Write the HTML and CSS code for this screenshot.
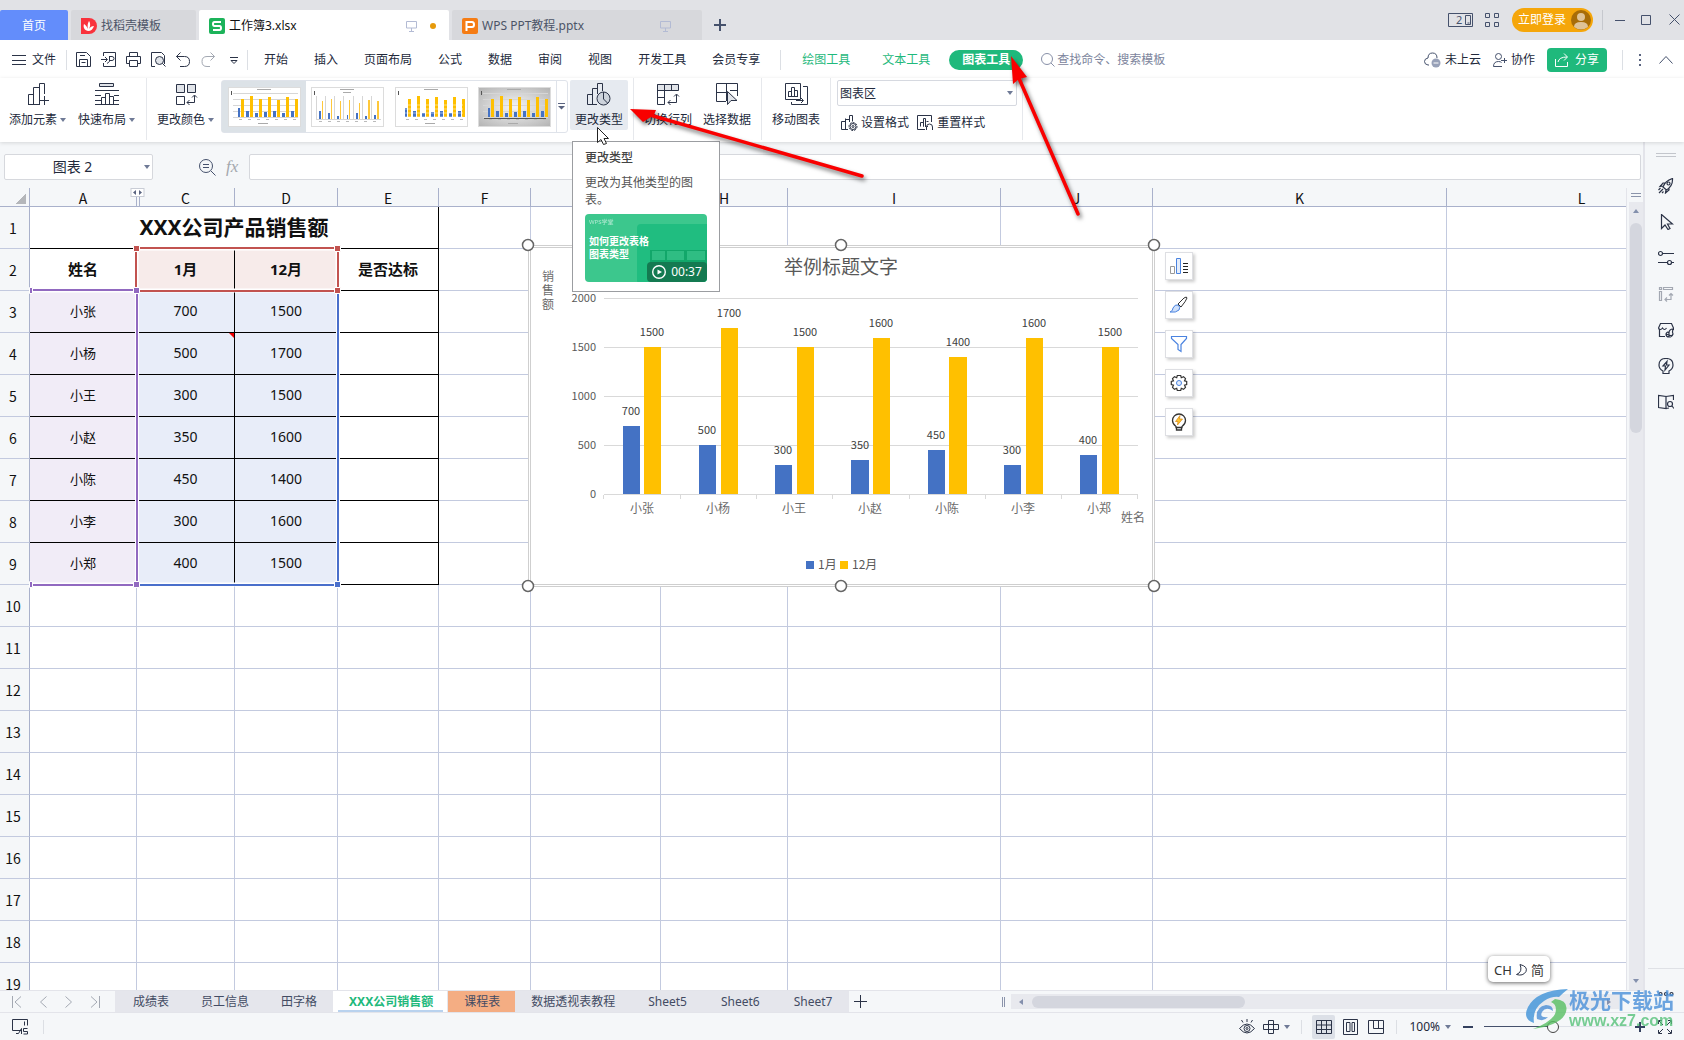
FILE: index.html
```html
<!DOCTYPE html>
<html lang="zh-CN">
<head>
<meta charset="utf-8">
<title>工作簿3.xlsx</title>
<link rel="stylesheet" href="styles.css">
</head>
<body>
<header class="titlebar">
  <nav class="doc-tabs">
    <button class="doc-tab home">首页</button>
    <button class="doc-tab docer">
      <svg width="16" height="16"><path d="M0 0h8a8 8 0 0 1 0 16H0z" fill="#f9323c"/><path d="M7 13C3 12 2 9 3 6c2 1 3 3 4 5-1-4 0-6 1-8 2 3 1 6 0 8 1-2 3-3 5-3-1 3-3 5-6 5z" fill="#fff"/></svg>
      <span>找稻壳模板</span>
    </button>
    <button class="doc-tab active">
      <svg width="16" height="16"><rect width="16" height="16" rx="2" fill="#1cb35a"/><path d="M12 4H5.500Q4 4 4 6T5.500 8h5Q12 8 12 10t-1.500 2H4" fill="none" stroke="#fff" stroke-width="2"/></svg>
      <span class="tab-name">工作簿3.xlsx</span>
      <svg width="12" height="12" class="line faint"><path d="M.5 1.500h10v6.500H.5zM5.500 8v3M3 11.500h5"/></svg>
      <i class="unsaved"></i>
    </button>
    <button class="doc-tab slides">
      <svg width="16" height="16"><rect width="16" height="16" rx="2" fill="#f57c14"/><path d="M4.500 13V4H10q2 0 2 2.500T10 9H5" fill="none" stroke="#fff" stroke-width="2"/></svg>
      <span class="tab-name">WPS PPT教程.pptx</span>
      <svg width="12" height="12" class="line faint"><path d="M.5 1.500h10v6.500H.5zM5.500 8v3M3 11.500h5"/></svg>
    </button>
    <button class="new-tab" aria-label="新建"><svg width="12" height="12"><path d="M6 0v12M0 6h12" stroke="#45516c" stroke-width="2"/></svg></button>
  </nav>
  <div class="window-tools">
    <button aria-label="窗口"><svg width="25" height="14" class="line slate"><path d="M.5.5h24v13H.5zM17.500 2.500h5v9h-5zM19.500 10h2"/><text x="8" y="11" class="icon-num">2</text></svg></button>
    <button aria-label="应用"><svg width="14" height="14" class="line slate"><path d="M.5.5h4v4h-4zM9.500.5h4v4h-4zM.5 9.500h4v4h-4zM9.500 9.500h4v4h-4z"/></svg></button>
    <button class="login">立即登录<svg width="20" height="20"><circle cx="10" cy="10" r="10" fill="#a86d08"/><circle cx="10" cy="7" r="4" fill="#dfc397"/><path d="M3 17q0-5 7-5t7 5q-7 5-14 0z" fill="#dfc397"/></svg></button>
    <i class="rule"></i>
    <button aria-label="最小化"><svg width="10" height="10" class="line slate"><path d="M0 5.500h10"/></svg></button>
    <button aria-label="最大化"><svg width="10" height="10" class="line slate"><path d="M.5.5h9v9h-9z"/></svg></button>
    <button aria-label="关闭"><svg width="11" height="11" class="line slate"><path d="M.5.5l10 10M10.500.5l-10 10"/></svg></button>
  </div>
</header>

<nav class="menubar">
  <button class="file"><svg width="14" height="12" class="line"><path d="M0 1.500h14M0 6.500h14M0 10.500h14"/></svg>文件</button>
  <i class="rule"></i>
  <div class="quick">
    <button aria-label="保存"><svg width="16" height="16" class="line"><path d="M.5.5h10l4 4v10H.5zM3.500 14.500v-7h8v7M4 3.500h5M5.500 10.500h4"/></svg></button>
    <button aria-label="输出为PDF"><svg width="16" height="16" class="line"><path d="M2.500 4V.5h12v14h-12V11M0 7.500h6M4 5l2.500 2.500L4 10M8 4.500h3q2 0 2 2t-2 2H8.500M8.500 4.500v5L6 11.500"/></svg></button>
    <button aria-label="打印"><svg width="16" height="16" class="line"><path d="M3.500 4.500v-4h8v4M3.500 11.500h-3v-7h14v7h-3M3.500 8.500h8v6h-8z"/></svg></button>
    <button aria-label="打印预览"><svg width="16" height="16" class="line"><path d="M4 14.500H.5V.5h10l3 3V5M13.500 12v-7"/><circle cx="8.500" cy="8.500" r="4" fill="#e1e4e9"/><path d="M11.500 11.500l3 3"/></svg></button>
    <button aria-label="撤销"><svg width="16" height="16" class="line"><path d="M4.500.5l-4 4 4 4M.5 4.500h8q5 0 5 5t-5 5H4"/></svg></button>
    <button aria-label="恢复"><svg width="16" height="16" class="line pale"><path d="M9.500.5l4 4-4 4M13.500 4.500H6q-5 0-5 5t5 5h3"/></svg></button>
    <button aria-label="更多"><svg width="8" height="8" class="line"><path d="M0 .5h8M1 3.500h6L4 6.500z"/></svg></button>
  </div>
  <i class="rule"></i>
  <div class="menus">
    <a href="#">开始</a><a href="#">插入</a><a href="#">页面布局</a><a href="#">公式</a><a href="#">数据</a><a href="#">审阅</a><a href="#">视图</a><a href="#">开发工具</a><a href="#">会员专享</a>
  </div>
  <i class="rule"></i>
  <div class="menus context">
    <a href="#">绘图工具</a><a href="#">文本工具</a><a href="#" class="current">图表工具</a>
  </div>
  <label class="search"><svg width="14" height="14" class="line"><circle cx="6" cy="6" r="5.500"/><path d="M10 10l3.500 3.500"/></svg><input placeholder="查找命令、搜索模板" aria-label="查找命令、搜索模板"></label>
  <div class="account">
    <button><svg width="17" height="16" class="line"><path d="M5 13H4Q.5 12.500.5 9.500T4 6q0-5 4.500-5T13 6"/><circle cx="12" cy="11" r="4.500" fill="#98a1b8" stroke="none"/><path d="M9.500 11h5" stroke="#fff"/></svg>未上云</button>
    <button><svg width="14" height="14" class="line"><circle cx="5.500" cy="3.500" r="3"/><path d="M9 13.500H.5q0-5 5-5 2 0 3 1M8 7.500h6M11.500 5v5"/></svg>协作</button>
    <button class="share"><svg width="14" height="14" class="line"><path d="M.5 6v7.500h12V9M3 9q1-5 9-5M9 .5L12.500 4 9 7.500"/></svg>分享</button>
    <i class="rule"></i>
    <button aria-label="更多"><svg width="4" height="14"><path d="M1 1h2v2H1zM1 6h2v2H1zM1 11h2v2H1z" fill="#5a6480"/></svg></button>
    <button aria-label="收起"><svg width="14" height="8" class="line"><path d="M.5 7.500l6.500-7 6.500 7"/></svg></button>
  </div>
</nav>

<section class="ribbon">
  <div class="group first">
    <button class="tool"><svg width="24" height="24" class="line"><path d="M2.500 22.500v-10h5v10M7.500 22.500v-17h6v17M2 22.500h12M13.500 14V1.500h5V12M18.500 14v9M14 18.500h9"/></svg><span class="drop">添加元素</span></button>
    <button class="tool"><svg width="24" height="24" class="line"><path d="M4.500 1.500h14v3h-14z" fill="#e1e4e9"/><path d="M0 8.500h24M0 13.500h6M0 18.500h6M0 22.500h24M6.500 22.500v-7h4v7M10.500 22V11.500h4V22M14.500 14.500h4v8M19 13.500h5M19 18.500h5"/></svg><span class="drop">快速布局</span></button>
  </div>
  <div class="group">
    <button class="tool"><svg width="24" height="24" class="line"><path d="M2.500 2.500h8v8h-8zM13.500 2.500h8v8h-8z" fill="#e1e4e9"/><path d="M2.500 14.500h8v8h-8zM13 20.500h7.500v-7M18 15.500l2.500-2.500 2.500 2.500M15.500 18L13 20.500l2.500 2.500"/></svg><span class="drop">更改颜色</span></button>
  </div>
  <div class="gallery">
    <button class="thumb chosen" aria-label="样式1"><svg width="71" height="38"><use href="#mini-lines"/><use href="#mini"/></svg></button>
    <button class="thumb" aria-label="样式2"><svg width="71" height="38"><use href="#mini-cols"/><use href="#mini-thin"/></svg></button>
    <button class="thumb" aria-label="样式3"><svg width="71" height="38"><use href="#mini"/><path d="M9 17h58M9 21h58M9 25h58M9 29h58" stroke="#fff" opacity=".5"/></svg></button>
    <button class="thumb gray" aria-label="样式4"><svg width="71" height="38"><use href="#mini-lines"/><use href="#mini"/><path d="M5 30.500h62" stroke="#555"/></svg></button>
    <button class="gallery-more" aria-label="更多样式"><svg width="8" height="7"><path d="M0 .5h7" stroke="#5a6480"/><path d="M0 3h7L3.500 6.500z" fill="#5a6480"/></svg></button>
  </div>
  <button class="tool hovered"><svg width="24" height="24" class="line"><path d="M10 22.500H.5v-10h5v10M5.500 14V6.500h5M10.500 12V1.500h5V9"/><circle cx="16.500" cy="16.500" r="6.500" fill="#cdd3dc"/><path d="M16.500 10v7l4 4"/></svg><span>更改类型</span></button>
  <div class="group ruled">
    <button class="tool"><svg width="24" height="24" class="line"><path d="M1.500 2.500h21v6h-21z" fill="#e1e4e9"/><path d="M8.500 2.500v20h-7v-20M15.500 2.500v6M1.500 15.500h7M12 20.500h8.500v-8M18 14.500l2.500-2.500 2.500 2.500M14.500 18L12 20.500l2.500 2.500"/></svg><span>切换行列</span></button>
    <button class="tool"><svg width="24" height="24" class="line"><path d="M11 19.500H1.500v-18h21V14M1.500 10.500h10v-9M15 8.500h7.500M11.500 19v-9"/><path d="M12.500 9.500v13l3.500-4h6z" fill="#e1e4e9"/></svg><span>选择数据</span></button>
  </div>
  <div class="group">
    <button class="tool"><svg width="24" height="24" class="line"><path d="M1.500 1.500h15v16h-15zM19 4.500h4.500v18h-16V20M4.500 14.500v-5h3v5M7.500 14.500v-9h3v9M10.500 8.500h3v6M4 14.500h10M12 18.500h7M17 16l2.500 2.500L17 21"/></svg><span>移动图表</span></button>
  </div>
  <div class="format">
    <select aria-label="图表元素"><option>图表区</option></select>
    <div class="format-row">
      <button><svg width="17" height="16" class="line"><path d="M7 14.500H.5v-8h4v8M4.500 9V3.500M4.500 4.500h4M8.500 7V.5h3v6"/><circle cx="12" cy="11.500" r="4" stroke-dasharray="2 1"/><circle cx="12" cy="11.500" r="3"/><circle cx="12" cy="11.500" r="1"/></svg>设置格式</button>
      <button><svg width="17" height="16" class="line"><path d="M8 14.500H.5V.5h14V7M3.500 11.500v-4h3v4M6.500 11.500v-8h2v8M9.500 6.500h2M9.500 15v-3q0-3 3-3t3 3v3M8 11l1.500 1.500L11 11"/></svg>重置样式</button>
    </div>
  </div>
</section>

<main class="workspace">
  <div class="book">
    <div class="formula-bar">
      <div class="name-box"><input value="图表 2" aria-label="名称框"><i class="caret"></i></div>
      <button class="lens" aria-label="查找"><svg width="17" height="17" class="line"><circle cx="7" cy="7" r="6.500"/><path d="M12 12l4.500 4.500M4 5.500h6M4 8.500h6"/></svg></button>
      <button class="fx">fx</button>
      <input class="formula" aria-label="编辑栏">
    </div>
    <div class="sheet-area">
      <div class="sheet">
        <table class="cells">
          <colgroup><col class="w-head"><col class="w-a"><col class="w-c"><col class="w-d"><col class="w-e"><col class="w-f"><col class="w-g"><col class="w-h"><col class="w-i"><col class="w-j"><col class="w-k"><col></colgroup>
          <thead><tr><th class="corner"></th><th>A</th><th>C</th><th>D</th><th>E</th><th>F</th><th>G</th><th>H</th><th>I</th><th>J</th><th>K</th><th class="col-l">L</th></tr></thead>
          <tbody>
          <tr><th>1</th><td colspan="4" class="title box">XXX公司产品销售额</td><td></td><td></td><td></td><td></td><td></td><td></td><td></td></tr>
          <tr class="heads"><th>2</th><td class="box open">姓名</td><td class="box red">1月</td><td class="box red open">12月</td><td class="box">是否达标</td><td></td><td></td><td></td><td></td><td></td><td></td><td></td></tr>
          <tr><th>3</th><td class="box name">小张</td><td class="box blue">700</td><td class="box blue">1500</td><td class="box"></td><td></td><td></td><td></td><td></td><td></td><td></td><td></td></tr>
          <tr><th>4</th><td class="box name">小杨</td><td class="box blue">500</td><td class="box blue">1700</td><td class="box"></td><td></td><td></td><td></td><td></td><td></td><td></td><td></td></tr>
          <tr><th>5</th><td class="box name">小王</td><td class="box blue">300</td><td class="box blue">1500</td><td class="box"></td><td></td><td></td><td></td><td></td><td></td><td></td><td></td></tr>
          <tr><th>6</th><td class="box name">小赵</td><td class="box blue">350</td><td class="box blue">1600</td><td class="box"></td><td></td><td></td><td></td><td></td><td></td><td></td><td></td></tr>
          <tr><th>7</th><td class="box name">小陈</td><td class="box blue">450</td><td class="box blue">1400</td><td class="box"></td><td></td><td></td><td></td><td></td><td></td><td></td><td></td></tr>
          <tr><th>8</th><td class="box name">小李</td><td class="box blue">300</td><td class="box blue">1600</td><td class="box"></td><td></td><td></td><td></td><td></td><td></td><td></td><td></td></tr>
          <tr><th>9</th><td class="box name">小郑</td><td class="box blue">400</td><td class="box blue">1500</td><td class="box"></td><td></td><td></td><td></td><td></td><td></td><td></td><td></td></tr>
          <tr><th>10</th><td></td><td></td><td></td><td></td><td></td><td></td><td></td><td></td><td></td><td></td><td></td></tr>
          <tr><th>11</th><td></td><td></td><td></td><td></td><td></td><td></td><td></td><td></td><td></td><td></td><td></td></tr>
          <tr><th>12</th><td></td><td></td><td></td><td></td><td></td><td></td><td></td><td></td><td></td><td></td><td></td></tr>
          <tr><th>13</th><td></td><td></td><td></td><td></td><td></td><td></td><td></td><td></td><td></td><td></td><td></td></tr>
          <tr><th>14</th><td></td><td></td><td></td><td></td><td></td><td></td><td></td><td></td><td></td><td></td><td></td></tr>
          <tr><th>15</th><td></td><td></td><td></td><td></td><td></td><td></td><td></td><td></td><td></td><td></td><td></td></tr>
          <tr><th>16</th><td></td><td></td><td></td><td></td><td></td><td></td><td></td><td></td><td></td><td></td><td></td></tr>
          <tr><th>17</th><td></td><td></td><td></td><td></td><td></td><td></td><td></td><td></td><td></td><td></td><td></td></tr>
          <tr><th>18</th><td></td><td></td><td></td><td></td><td></td><td></td><td></td><td></td><td></td><td></td><td></td></tr>
          <tr><th>19</th><td></td><td></td><td></td><td></td><td></td><td></td><td></td><td></td><td></td><td></td><td></td></tr>
          </tbody>
        </table>

        <!-- Range outlines, hidden-column marker and comment flag -->
        <svg class="ranges" width="440" height="400" viewBox="0 188 440 400" fill="none">
          <path d="M139.500 196v10" stroke="#a9b1cb"/>
          <rect x="131" y="188.500" width="13" height="8" fill="#fff" stroke="#c9cdd6"/>
          <path d="M136 190v5l-3-2.500zM139 190v5l3-2.500z" fill="#5a6480"/>
          <path d="M229 333h5v5z" fill="#f00000"/>
          <g stroke="#fff" stroke-width="4"><path d="M31 290.500H137V584.500H31M137 584.500H338V290.500M136.500 248.500H337.500V290.500H136.500z"/></g>
          <path d="M137 585H338V290.500" stroke="#4a6fcb" stroke-width="2"/>
          <path d="M31 290H137V585H31" stroke="#9169c0" stroke-width="2"/>
          <path d="M136 248H338V291H136z" stroke="#c25350" stroke-width="2"/>
          <g stroke="#fff">
            <path d="M133.500 245.500h6v6h-6zM334.500 245.500h6v6h-6zM334.500 287.500h6v6h-6z" fill="#c25350"/>
            <path d="M133.500 287.500h6v6h-6zM133.500 581.500h6v6h-6zM29.500 287.500h3v6h-3zM29.500 581.500h3v6h-3z" fill="#9169c0"/>
            <path d="M334.500 581.500h6v6h-6z" fill="#4a6fcb"/>
          </g>
        </svg>

        <svg class="chart" width="626" height="341" viewBox="528 245 626 341">
          <rect x="528.500" y="245.500" width="626" height="341" fill="#fff" stroke="#cfcfcf"/>
          <rect x="530.500" y="247.500" width="622" height="337" fill="#fff" stroke="#cfcfcf"/>
          <text x="841" y="274" class="chart-title">举例标题文字</text>
          <g class="axis-title"><text x="548" y="281">销</text><text x="548" y="295">售</text><text x="548" y="309">额</text><text x="1133" y="522">姓名</text></g>
          <path d="M604 298.500h534M604 347.500h534M604 396.500h534M604 445.500h534M604 494.500h534M603.500 495v4M680.500 495v4M756.500 495v4M832.500 495v4M909.500 495v4M985.500 495v4M1061.500 495v4M1137.500 495v4" stroke="#d9d9d9"/>
          <g class="scale"><text x="596" y="302">2000</text><text x="596" y="351">1500</text><text x="596" y="400">1000</text><text x="596" y="449">500</text><text x="596" y="498">0</text></g>
          <path fill="#4472c4" d="M623 426h17v68h-17zM699 445h17v49h-17zM775 465h17v29h-17zM851 460h18v34h-18zM928 450h17v44h-17zM1004 465h17v29h-17zM1080 455h17v39h-17z"/>
          <path fill="#ffc000" d="M644 347h17v147h-17zM721 328h17v166h-17zM797 347h17v147h-17zM873 338h17v156h-17zM949 357h18v137h-18zM1026 338h17v156h-17zM1102 347h17v147h-17z"/>
          <g class="value"><text x="631" y="415">700</text><text x="707" y="434">500</text><text x="783" y="454">300</text><text x="860" y="449">350</text><text x="936" y="439">450</text><text x="1012" y="454">300</text><text x="1088" y="444">400</text>
          <text x="652" y="336">1500</text><text x="729" y="317">1700</text><text x="805" y="336">1500</text><text x="881" y="327">1600</text><text x="958" y="346">1400</text><text x="1034" y="327">1600</text><text x="1110" y="336">1500</text></g>
          <g class="category"><text x="642" y="513">小张</text><text x="718" y="513">小杨</text><text x="794" y="513">小王</text><text x="870" y="513">小赵</text><text x="947" y="513">小陈</text><text x="1023" y="513">小李</text><text x="1099" y="513">小郑</text></g>
          <path d="M806 561h8v8h-8z" fill="#4472c4"/><path d="M840 561h8v8h-8z" fill="#ffc000"/>
          <g class="legend"><text x="818" y="569">1月</text><text x="852" y="569">12月</text></g>
          <g fill="#fff" stroke="#666" stroke-width="1.500"><circle cx="528" cy="245" r="5.500"/><circle cx="841" cy="245" r="5.500"/><circle cx="1154" cy="245" r="5.500"/><circle cx="528" cy="586" r="5.500"/><circle cx="841" cy="586" r="5.500"/><circle cx="1154" cy="586" r="5.500"/></g>
        </svg>

        <div class="chart-tools">
          <button aria-label="图表元素"><svg width="20" height="20" fill="none"><path d="M1.500 10.500h4v7h-4z" stroke="#999"/><path d="M7.500 2.500h4v15h-4z" fill="#e4edfb" stroke="#4a83e0"/><path d="M14 7.500h5M14 10.500h5M14 13.500h5M14 16.500h5" stroke="#222"/></svg></button>
          <button aria-label="图表样式"><svg width="20" height="20" fill="none"><path d="M9 9l6-6q3-2 3 0-1 3-6 9z" stroke="#333"/><path d="M1 17q3-1 3-4 2-4 5-3 3 2 1 5-3 3-9 2z" fill="#cfe0fa" stroke="#4a83e0"/></svg></button>
          <button aria-label="图表筛选器"><svg width="20" height="20" fill="none"><path d="M2.500 2.500h15v2L12 10.500v7l-3-2v-5l-6.500-6z" stroke="#4a83e0" stroke-width="1.200"/></svg></button>
          <button aria-label="设置"><svg width="20" height="20" fill="none"><path d="M8.300 2.500h3.400l.6 2.200 2.200-1 2 2-1 2.200 2.200.6v3l-2.200.6 1 2.200-2 2-2.200-1-.6 2.200H8.300l-.6-2.200-2.200 1-2-2 1-2.200-2.200-.6v-3l2.200-.6-1-2.200 2-2 2.200 1z" stroke="#333" stroke-width="1.200"/><circle cx="10" cy="10" r="2.500" fill="#e4edfb" stroke="#4a83e0"/></svg></button>
          <button aria-label="在线图表"><svg width="20" height="20" fill="none"><path d="M7 15.500v-1Q3.500 12 3.500 8.500a6.500 6.500 0 0 1 13 0q0 3.500-3.500 6v1zM7.500 15.500v2.500h5v-2.500" stroke="#333" stroke-width="1.300"/><path d="M11 3.500L6.500 9.500H9L8.500 13l5-6h-3z" fill="#ffc52e" stroke="#d68410" stroke-width=".7"/></svg></button>
        </div>
      </div>
      <div class="vscroll">
        <i class="split"></i>
        <div class="track"><i class="up"></i><i class="thumb-v"></i><i class="down"></i></div>
      </div>
    </div>
    <div class="sheet-bar">
      <div class="sheet-nav">
        <button aria-label="第一张"><svg width="10" height="12" class="line"><path d="M.5 0v12M9 .5L3 6l6 5.500"/></svg></button>
        <button aria-label="上一张"><svg width="7" height="12" class="line"><path d="M6.500.5L.5 6l6 5.500"/></svg></button>
        <button aria-label="下一张"><svg width="7" height="12" class="line"><path d="M.5.5l6 5.500-6 5.500"/></svg></button>
        <button aria-label="最后一张"><svg width="10" height="12" class="line"><path d="M9.500 0v12M1 .5L7 6l-6 5.500"/></svg></button>
      </div>
      <div class="sheet-tabs">
        <button>成绩表</button><button>员工信息</button><button>田字格</button><button class="on">XXX公司销售额</button><button class="orange">课程表</button><button>数据透视表教程</button><button class="latin">Sheet5</button><button class="latin">Sheet6</button><button class="latin">Sheet7</button>
      </div>
      <button class="add-sheet" aria-label="新建工作表"><svg width="13" height="13" class="line"><path d="M6.500 0v13M0 6.500h13"/></svg></button>
      <i class="h-split"></i>
      <div class="hscroll"><i class="left"></i><i class="thumb-h"></i><i class="right"></i></div>
    </div>
  </div>
  <aside class="side-panel">
    <i class="grip"></i>
    <button aria-label="快捷"><svg width="16" height="16" class="line"><path d="M5 9q2-6 9.500-8.500Q15 8 8.500 12zM5.500 8L2 8.500 5 5h2M8 11.500l-.5 3.500 3.500-3V9.500M.5 12l2-2M1 15l4-4M4 15l1.500-1.500"/><circle cx="10.500" cy="5.500" r="1.500"/></svg></button>
    <button aria-label="选择"><svg width="16" height="16" class="line"><path d="M3.500.5v14l3.500-3.500 3 4.500 2-1-2.500-4.500h5z"/></svg></button>
    <button aria-label="属性"><svg width="16" height="16" class="line"><circle cx="2.500" cy="3.500" r="2"/><path d="M5 3.500h11M0 12.500h9M14 12.500h2"/><circle cx="11.500" cy="12.500" r="2"/></svg></button>
    <button aria-label="转置"><svg width="16" height="16" class="line pale"><path d="M1.500 1.500h2v2h-2zM5.500 1.500h9v2h-9zM1.500 5.500h2v9h-2zM7 13.500h6v-6M11 9.500l2-2 2 2M9 11.500l-2 2 2 2"/></svg></button>
    <button aria-label="模板"><svg width="16" height="16" class="line"><path d="M7 14.500H1.500V8L.5 6l2-4.500h11l2 4.500v2M.5 6q2 3 4 0 2 3 4 0"/><path d="M8 12q1-3 3-1 0-4 4-4-1 3 0 5-1 3-4 3t-3-3zM11 11v4M8 12l6 2"/></svg></button>
    <button aria-label="分析"><svg width="16" height="16" class="line"><path d="M5 13q-4-2-4-6 0-6.500 7-6.500T15 7q0 4-4 6v2.500H5zM9 3.500L5 8h2.500L7 12l4-5H8.500z"/></svg></button>
    <button aria-label="帮助"><svg width="16" height="16" class="line"><path d="M8 2.500v12l-7.500-1V1.500zM8 2.500l7.500-1V6M8 14.500l3-.5"/><circle cx="12" cy="10" r="2.500"/><path d="M14 12l2 2.500"/></svg></button>
    <div class="more"><svg width="16" height="6" class="line"><circle cx="2.500" cy="3" r="1.500"/><circle cx="8" cy="3" r="1.500"/><circle cx="13.500" cy="3" r="1.500"/></svg></div>
  </aside>
</main>

<footer class="statusbar">
  <button aria-label="宏"><svg width="17" height="16" class="line"><path d="M9 11.500H.5V.5h15v6M4 14.500h2.500l3-5v5.500M15.500 9.500h-4v3h4v2.500h-4M12.500 2.500v4"/></svg></button>
  <i class="rule"></i>
  <div class="view-tools">
    <button aria-label="护眼模式"><svg width="16" height="16" class="line"><path d="M.5 9.500q7.500-9 15 0-7.500 9-15 0zM8 0v3M2.500 1l1.500 2.500M13.500 1L12 3.500"/><circle cx="8" cy="9.500" r="3"/><circle cx="8" cy="9.500" r="1"/></svg></button>
    <button aria-label="阅读模式" class="reading"><svg width="16" height="14" class="line"><path d="M5.500.5h5v13h-5zM.5 4.500h15v5H.5z"/></svg><i class="caret"></i></button>
    <i class="rule"></i>
    <button aria-label="普通视图" class="chosen"><svg width="16" height="14" class="line"><path d="M.5.5h15v13H.5zM.5 5h15M.5 9.500h15M5.500.5v13M10.500.5v13"/></svg></button>
    <button aria-label="分页预览"><svg width="16" height="16" class="line"><path d="M.5.5h14v15H.5zM3.500 3.500h3.500v9H3.500zM9 3.500h2.500v9H9z"/></svg></button>
    <button aria-label="页面布局"><svg width="16" height="14" class="line"><path d="M.5.5h15v13H.5zM5.500.5v8M10.500.5v8M5.500 8.500h10"/></svg></button>
    <i class="rule"></i>
    <button class="zoom">100%<i class="caret"></i></button>
    <button aria-label="缩小"><svg width="10" height="10"><path d="M0 5h10" stroke="#33405e" stroke-width="2"/></svg></button>
    <input type="range" min="0" max="100" value="47" aria-label="缩放">
    <button aria-label="放大"><svg width="10" height="10"><path d="M0 5h10M5 0v10" stroke="#33405e" stroke-width="2"/></svg></button>
    <button aria-label="全屏" class="full"><svg width="14" height="14" class="line"><path d="M.5 4V.5H4M10 .5h3.500V4M13.500 10v3.500H10M4 13.500H.5V10M1 1l4 4M13 1L9 5M13 13L9 9M1 13l4-4"/></svg></button>
  </div>
</footer>

<div class="tooltip" role="tooltip">
  <b>更改类型</b>
  <p>更改为其他类型的图表。</p>
  <div class="lesson">
    <small>WPS学堂</small>
    <strong>如何更改表格<br>图表类型</strong>
    <svg class="lesson-art" width="70" height="58"><rect width="75" height="60" rx="4" fill="#20bd80"/><path d="M13 26h57v32H13z" fill="#12a76a"/><path d="M15 27h13v9H15zM30 27h17v9H30zM50 27h18v9H50zM15 39h13v9H15zM30 39h17v9H30z" fill="#2fbd83"/></svg>
    <span class="time"><svg width="14" height="14"><circle cx="7" cy="7" r="6.300" fill="none" stroke="#fff" stroke-width="1.400"/><path d="M5.500 4.500v5L10 7z" fill="#fff"/></svg>00:37</span>
  </div>
</div>

<div class="ime">CH <svg width="11" height="12" class="line"><path d="M4 .5q8 2 6 7-3 5-9.500 3Q7 8 4 .5z"/></svg> 简</div>

<div class="watermark">
  <svg width="44" height="42"><path d="M43 1Q12 2 3 19-3 31 9 35 7 21 19 13q8-5 15-4 4-4 9-8z" fill="#3f93d9"/><path d="M30 11q14 1 11 13-4 13-33 17 18-7 22-15 3-9-4-12z" fill="#58bf62"/><path d="M12 31q-2-12 9-14 7 0 7 6-7-5-11 1-3 6 6 5-4 5-11 2z" fill="#4c8fd6"/></svg>
  <div><b>极光下载站</b><span>www.xz7.com</span></div>
</div>

<!-- Pointer and callout arrows above everything -->
<svg class="callouts">
  <g class="arrows" fill="#f90000" stroke="#f90000">
    <path d="M862 176L650 115" stroke-width="3.500" stroke-linecap="round"/><path d="M630 109l26 1-2 5-11 7z" stroke="none"/>
    <path d="M1078 214L1018 76" stroke-width="3.500" stroke-linecap="round"/><path d="M1011 56l2 28 6-5 8-2z" stroke="none"/>
  </g>
  <path d="M597.500 127.500v15l3.500-3 2.500 5 3-1-2.500-5h4.500z" fill="#fff" stroke="#222"/>
</svg>

<svg width="0" height="0" class="defs">
  <defs>
    <g id="mini-lines"><path d="M4 5.500h65M4 11.500h65M4 17.500h65M4 23.500h65M4 29.500h65" stroke="#d6d6d6"/></g>
    <g id="mini-cols"><path d="M4.500 8v23M13.500 8v23M22.500 8v23M31.500 8v23M41.500 8v23M50.500 8v23M59.500 8v23M4 31.500h65" stroke="#d6d6d6"/></g>
    <g id="mini"><path d="M28 1.500h14M29 35.500h10" stroke="#aaa"/><path d="M2.500 3v4" stroke="#555"/><path fill="#4472c4" d="M9 20h2v9H9zM17 23h3v6h-3zM26 25h3v4h-3zM35 24h3v5h-3zM44 23h3v6h-3zM53 25h3v4h-3zM62 23h3v6h-3z"/><path fill="#ffc000" d="M12 11h3v18h-3zM21 8h3v21h-3zM30 11h3v18h-3zM39 9h3v20h-3zM48 12h3v17h-3zM57 9h3v20h-3zM66 11h3v18h-3z"/><path d="M10 31.500h58" stroke="#bbb" stroke-dasharray="3 6"/></g>
    <g id="mini-thin"><path d="M28 1.500h14M31 4.500h8" stroke="#aaa"/><path d="M2.500 3v4" stroke="#555"/><path fill="#4472c4" d="M7 23h2v8H7zM16 25h2v6h-2zM25 28h2v3h-2zM35 27h1v4h-1zM44 25h2v6h-2zM53 28h2v3h-2zM62 27h2v4h-2z"/><path fill="#ffc83a" d="M10 13h1v18h-1zM19 11h1v20h-1zM28 13h1v18h-1zM37 12h1v19h-1zM47 15h1v16h-1zM56 12h2v19h-2zM65 13h2v18h-2z"/><path d="M7 33.500h60" stroke="#bbb" stroke-dasharray="3 6"/></g>
  </defs>
</svg>
</body>
</html>
```
FILE: styles.css
```css
* { box-sizing: border-box; }

body {
  margin: 0;
  height: 100vh;
  display: flex;
  flex-direction: column;
  position: relative;
  overflow: hidden;
  background: #f5f7f9;
  color: #22293b;
  font: 12px/16px "Noto Sans", "Noto Sans CJK SC", sans-serif;
}

button, input, select { font: inherit; color: inherit; margin: 0; }
button { border: 0; padding: 0; background: none; display: flex; align-items: center; white-space: nowrap; }
a { color: inherit; text-decoration: none; white-space: nowrap; }
svg { display: block; flex: none; }
.line { fill: none; stroke: #2b3347; stroke-width: 1; }
.slate { stroke: #45516c; }
.faint { stroke: #b3bbd4; }
.pale { stroke: #a3a8b2; }
.rule { width: 1px; flex: none; background: #dcdfe4; }
.icon-num { font-size: 11px; fill: #45516c; stroke: none; }
.caret { width: 0; height: 0; flex: none; border: 3px solid transparent; border-top: 4px solid #6f7a96; border-bottom: 0; }

/* Title bar */
.titlebar { height: 40px; flex: none; display: flex; justify-content: space-between; background: #e1e2e6; }
.doc-tabs { display: flex; align-items: flex-end; gap: 3px; }
.doc-tab { height: 30px; padding: 2px 10px 0; gap: 4px; background: #d7d8dc; color: #4c5467; border-radius: 2px 2px 0 0; }
.doc-tab.home { width: 68px; justify-content: center; background: #638dfb; color: #fff; }
.doc-tab.docer { width: 125px; }
.doc-tab.active, .doc-tab.slides { width: 250px; }
.doc-tab.active { background: #fff; color: #111; }
.tab-name { flex: 1; text-align: left; }
.doc-tab.slides { padding-right: 30px; }
.unsaved { width: 6px; height: 6px; margin: 0 3px 0 8px; border-radius: 50%; background: #e69a0b; }
.new-tab { height: 26px; align-self: center; margin: 10px 0 0 9px; }
.window-tools { display: flex; align-items: center; gap: 16px; padding: 0 4px 1px 0; }
.window-tools .rule { height: 20px; background: #c6c8ce; margin: 0 -4px 0 -7px; }
.window-tools button:first-child { margin-right: -4px; }
.window-tools button:last-child { margin-left: 2px; }
.login { height: 24px; gap: 5px; padding: 0 2px 0 6px; border-radius: 12px; background: #f5a60a; color: #fff; margin-left: -3px; }

/* Menu bar */
.menubar { height: 38px; flex: none; display: flex; align-items: center; background: #fff; padding: 1px 11px 0 12px; }
.menubar > .rule { height: 20px; }
.file { gap: 6px; margin-right: 10px; }
.quick { display: flex; align-items: center; gap: 9px; padding: 0 5px 0 9px; }
.quick button:last-child { margin: 2px 4px 0 4px; }
.menus { display: flex; gap: 26px; padding: 0 20px 0 16px; }
.menus.context { gap: 32px; padding: 0 18px 0 21px; align-items: center; color: #1fb97c; }
.menus .current { padding: 2px 13px; margin-left: -13px; border-radius: 10px; background: #1fb97c; color: #fff; font-weight: bold; }
.search { display: flex; align-items: center; gap: 2px; flex: 1; }
.search .line { stroke: #8890a8; }
.search input { flex: 1; min-width: 0; border: 0; padding: 0; outline: 0; }
.search input::placeholder { color: #7c849c; opacity: 1; }
.account { display: flex; align-items: center; gap: 12px; }
.account button { gap: 4px; }
.account .line { stroke: #45516c; }
.account .share { width: 60px; height: 24px; justify-content: center; gap: 6px; border-radius: 4px; background: #1fb97c; color: #fff; }
.account .share .line { stroke: #fff; }
.account .rule { height: 20px; margin: 0 3px; }
.account button:last-child { margin-left: 5px; }

/* Ribbon */
.ribbon { height: 64px; flex: none; display: flex; background: #fff; box-shadow: 0 1px 4px #0002; z-index: 1; }
.group { height: 62px; display: flex; gap: 11px; padding: 2px 10px 0 10px; border-right: 1px solid #e6e8ec; align-items: flex-start; }
.group.first { padding-left: 9px; }
.group:nth-child(2) { border: 0; padding-right: 6px; }
.tool { flex-direction: column; padding-top: 2px; gap: 6px; }
.tool > svg { margin: 0 12px; }
.drop { display: flex; align-items: center; gap: 2px; }
.drop::after { content: ""; border: 3px solid transparent; border-top: 4px solid #6f7a96; border-bottom: 0; margin: 0 1px; }
.tool.hovered { align-self: flex-start; margin: 2px 5px 0 2px; padding: 2px 5px 2px; background: #e6eaf0; border-radius: 2px; }
.ruled { border-left: 1px solid #e6e8ec; }
.gallery { display: flex; height: 53px; width: 347px; margin-top: 2px; border: 1px solid #dfe3ea; border-radius: 3px; }
.thumb { width: 85px; justify-content: center; }
.thumb.chosen { width: 86px; background: #dce2e7; }
.thumb svg { background: #fff; outline: 1px solid #dcdcdc; }
.thumb.gray svg { background: radial-gradient(#f5f5f5, #b4b4b4); }
.gallery-more { width: 11px; margin-left: auto; justify-content: center; border-left: 1px solid #dfe3ea; }
.gallery-more svg { width: 8px; }
.format { padding: 2px 5px 0 6px; border-right: 1px solid #e6e8ec; height: 62px; }
.format select { width: 180px; height: 26px; border: 1px solid #d6d9e0; border-radius: 2px; padding: 1px 2px 0; appearance: none; background: url("data:image/svg+xml,%3Csvg xmlns='http://www.w3.org/2000/svg' width='6' height='4'%3E%3Cpath d='M0 0h6L3 4z' fill='%236f7a96'/%3E%3C/svg%3E") no-repeat right 3px center, #fff; }
.format-row { display: flex; gap: 8px; padding: 9px 0 0 4px; }
.format-row button { gap: 3px; }

/* Workspace */
.workspace { flex: 1; min-height: 0; display: flex; }
.book { flex: 1; min-width: 0; display: flex; flex-direction: column; border-right: 2px solid #e3e4ea; }
.formula-bar { height: 46px; flex: none; display: flex; align-items: center; padding: 4px 2px 0 4px; }
.name-box { width: 149px; height: 26px; display: flex; align-items: center; padding-right: 2px; background: #fff; border: 1px solid #d6d8dd; border-radius: 2px; }
.name-box input { flex: 1; min-width: 0; border: 0; background: none; text-align: center; font-size: 14px; padding: 0 4px 0 0; }
.lens { margin: 0 10px 0 46px; }
.lens .line { stroke: #45516c; }
.fx { color: #a4a7ad; font: italic 17px/20px "Liberation Serif", serif; margin-right: 8px; width: 15px; }
.formula { flex: 1; height: 26px; border: 1px solid #d6d8dd; border-radius: 2px; background: #fff; }
.sheet-area { flex: 1; min-height: 0; display: flex; }
.sheet { flex: 1; min-width: 0; position: relative; overflow: hidden; }
.cells { width: 100%; table-layout: fixed; border-collapse: separate; border-spacing: 0; background: #fff; color: #111; }
.w-head { width: 30px; } .w-a { width: 107px; } .w-c { width: 98px; } .w-d { width: 103px; } .w-e { width: 101px; }
.w-f { width: 92px; } .w-g { width: 130px; } .w-h { width: 127px; } .w-i { width: 213px; } .w-j { width: 152px; } .w-k { width: 294px; }
.cells th { padding: 0; background: #f5f7f9; font: 14px/16px "Noto Sans CJK SC", sans-serif; border-right: 1px solid #a9b1cb; border-bottom: 1px solid #a9b1cb; }
.cells thead th { height: 19px; padding-top: 2px; }
.cells thead th.col-l { border-right: 0; padding-left: 90px; }
.cells .corner { background: linear-gradient(135deg, transparent 50%, #b4b6ba 50%) no-repeat 15px 5px / 11px 11px, #f5f7f9; }
.cells tbody th { height: 42px; padding: 1px 3px 0 0; border-bottom-color: #c3cadf; }
.cells td { padding: 0 0 2px; text-align: center; font-size: 14px; line-height: 20px; border-right: 1px solid #c3cadf; border-bottom: 1px solid #c3cadf; }
.cells td:last-child { border-right: 0; }
.cells td.box { border-color: #000; }
.cells td.open { border-right-color: transparent; }
.cells td.title { font-size: 21px; font-weight: bold; }
.cells .heads td { font-size: 15px; font-weight: bold; }
.red { background: #f7ebea; }
.cells td.name { background: #f1ecf7; font-size: 13px; }
.blue { background: #e8edf9; }
.ranges { position: absolute; left: 0; top: 0; }
.chart { position: absolute; left: 528px; top: 57px; overflow: visible; font-family: "Noto Sans CJK SC", sans-serif; fill: #595959; }
.chart-title { font-size: 19px; text-anchor: middle; }
.axis-title, .category { font-size: 12px; text-anchor: middle; fill: #6b6b6b; }
.scale { font-size: 11px; text-anchor: end; }
.value { font-size: 11px; text-anchor: middle; fill: #404040; }
.legend { font-size: 12px; }
.chart-tools { position: absolute; left: 1165px; top: 64px; display: grid; gap: 11px; }
.chart-tools button { width: 28px; height: 28px; justify-content: center; background: #fff; border: 1px solid #dedfe3; box-shadow: 2px 2px 3px #0003; }

.vscroll { width: 17px; flex: none; display: flex; flex-direction: column; border-left: 1px solid #e3e4ea; padding-left: 2px; }
.split { height: 4px; margin: 5px 2px 5px; border: solid #8b94ab; border-width: 1px 0; }
.track { flex: 1; background: #e8e9ee; display: flex; flex-direction: column; align-items: center; padding: 7px 0; }
.up, .down, .left, .right { width: 0; height: 0; border: 3px solid transparent; flex: none; }
.up { border-bottom: 4px solid #8490ad; border-top: 0; }
.down { border-top: 4px solid #8490ad; border-bottom: 0; margin-top: auto; }
.thumb-v { width: 12px; height: 210px; margin-top: 10px; border-radius: 6px; background: #d4d6de; }

/* Sheet tabs */
.sheet-bar { height: 23px; flex: none; display: flex; align-items: center; border: solid #e3e4ea; border-width: 1px 0; }
.sheet-nav { width: 115px; display: flex; gap: 18px; padding-left: 12px; }
.sheet-nav .line { stroke: #a3a8b2; }
.sheet-tabs { display: flex; align-self: stretch; background: #e5e6ec; color: #434b63; }
.sheet-tabs button { padding: 0 16px; }
.sheet-tabs button:first-child { padding-left: 18px; }
.sheet-tabs .on { padding: 0 14px 0 16px; background: linear-gradient(#b9d2ee, #b9d2ee) no-repeat 5px bottom / 105px 2px, #fff; color: #1fb97c; font-weight: bold; }
.sheet-tabs .orange { padding: 0 15px 0 16px; background: #f4ad83; margin-left: 1px; }
.sheet-tabs .latin { padding: 0 17px; }
.add-sheet { margin-left: 5px; }
.h-split { width: 3px; height: 10px; margin: 0 6px 0 auto; border: solid #8b94ab; border-width: 0 1px; }
.hscroll { width: 37%; height: 15px; display: flex; align-items: center; padding: 0 8px; margin-right: 24px; background: #e8e9ee; }
.left { border-right: 4px solid #8490ad; border-left: 0; }
.right { border-left: 4px solid #8490ad; border-right: 0; margin-left: auto; }
.thumb-h { width: 213px; height: 12px; margin-left: 9px; border-radius: 6px; background: #d4d6de; }

/* Side panel */
.side-panel { width: 39px; flex: none; display: flex; flex-direction: column; align-items: center; gap: 20px; padding: 11px 0 0 3px; border-bottom: 1px solid #e3e4ea; }
.grip { width: 20px; height: 4px; margin-bottom: 1px; border: solid #c3c6cc; border-width: 1px 0; }
.side-panel .line { stroke-width: 1.2; }
.more { margin-top: auto; width: 100%; height: 44px; display: flex; align-items: center; justify-content: center; border-top: 1px solid #dfe1e6; padding-top: 6px; }

/* Status bar */
.statusbar { height: 27px; flex: none; display: flex; align-items: center; padding: 0 12px; }
.statusbar .rule { height: 14px; margin-left: 14px; }
.view-tools { margin-left: auto; display: flex; align-items: center; gap: 9px; }
.view-tools .rule { margin: 0 3px; }
.view-tools .reading, .view-tools .zoom { gap: 5px; }
.view-tools .reading { margin-right: -1px; margin-left: -1px; }
.view-tools .chosen { width: 23px; height: 24px; justify-content: center; background: #dce0e7; border-radius: 2px; margin: 0 -1px 0 -2px; }
.view-tools .zoom { margin-right: 3px; }
.view-tools input { width: 146px; height: 14px; margin: 0 -4px 0 2px; appearance: none; background: linear-gradient(90deg, #45516c 46%, #dde0e8 46%) no-repeat center / 100% 1px; }
.view-tools input::-webkit-slider-thumb { appearance: none; width: 12px; height: 12px; border: 1px solid #444; border-radius: 50%; background: #f5f7f9; }
.full { margin-left: 4px; }

/* Floating layers */
.tooltip { position: absolute; left: 572px; top: 141px; width: 148px; height: 151px; padding: 8px 12px; background: #fff; border: 1px solid #9b9da1; color: #555; z-index: 2; }
.tooltip b { display: block; font-weight: 500; color: #444; }
.tooltip p { margin: 8px 0 6px; line-height: 17px; }
.lesson { position: relative; width: 122px; height: 68px; padding: 4px 4px; overflow: hidden; border-radius: 4px; background: #3cc78d; color: #fff; }
.lesson small { display: block; font-size: 6px; line-height: 8px; opacity: .6; }
.lesson strong { display: block; position: relative; z-index: 1; margin-top: 9px; font-size: 10px; line-height: 13px; }
.lesson-art { position: absolute; right: 0; bottom: 0; }
.time { position: absolute; right: 0; bottom: 0; z-index: 1; width: 60px; height: 20px; display: flex; align-items: center; justify-content: center; gap: 5px; border-radius: 4px; background: #147a51; }
.ime { position: absolute; right: 134px; bottom: 58px; height: 26px; width: 62px; display: flex; align-items: center; justify-content: center; gap: 4px; border-radius: 5px; background: #fff; box-shadow: 0 1px 4px #0009; z-index: 2; color: #333; font-size: 13px; padding-top: 1px; }
.watermark { position: absolute; right: 10px; bottom: 8px; display: flex; gap: 0; opacity: .8; z-index: 3; }
.watermark b { display: block; font: bold 21px/22px "Noto Sans CJK SC", sans-serif; color: #4a90d9; }
.watermark span { display: block; font: bold 16px/22px "Liberation Sans", sans-serif; color: #57c27a; }
.callouts { position: absolute; left: 0; top: 0; width: 100%; height: 100%; z-index: 4; pointer-events: none; }
.arrows { filter: drop-shadow(2px 3px 2px #0008); }
.defs { position: absolute; }
```
